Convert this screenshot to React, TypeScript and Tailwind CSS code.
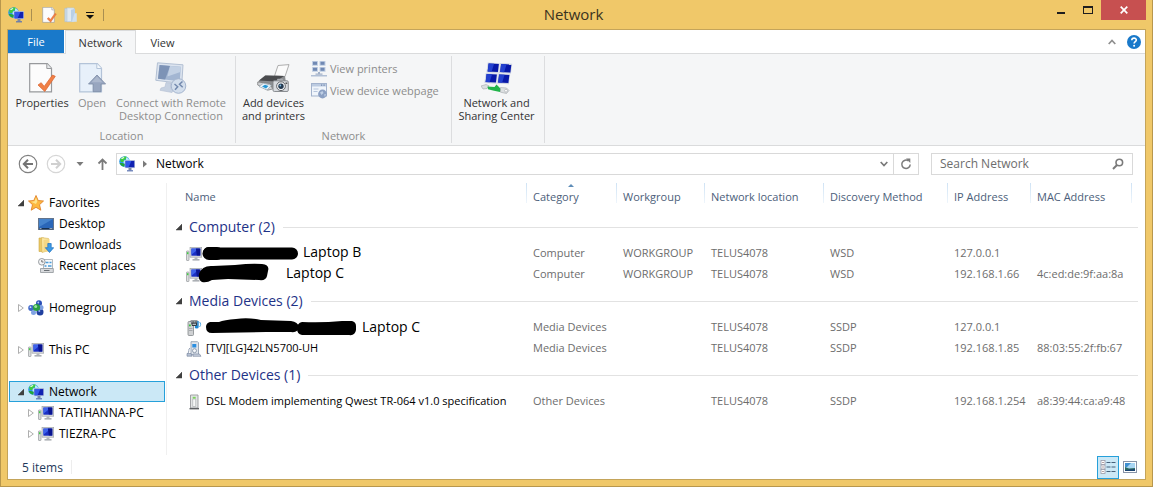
import { useState } from 'react';
import type { ReactNode } from 'react';

type IconProps = { className?: string };

/* ---------- icons ---------- */

function Monitor({ x, y, w, h }: { x: number; y: number; w: number; h: number }) {
  return (
    <g>
      <rect x={x} y={y} width={w} height={h} fill="#d5d7da" stroke="#9a9ea3" strokeWidth="0.6" />
      <rect x={x + 1.4} y={y + 1.3} width={w - 2.8} height={h - 2.8} fill="#1a2fc4" />
      <path d={`M${x + 1.4} ${y + 1.3}h${w - 4}L${x + 1.4} ${y + h - 2.5}z`} fill="#3d62ea" />
      <path d={`M${x + w / 2} ${y + 1.3}h${w / 2 - 1.4}v${h - 3}h-${w / 2 - 2.4}z`} fill="#0a1590" />
    </g>
  );
}

function NetworkIcon({ className = 'w-4 h-4' }: IconProps) {
  return (
    <svg viewBox="0 0 16 16" className={className}>
      <circle cx="5.5" cy="5.5" r="5.3" fill="#2f9be6" />
      <path d="M1 3.500C2.500.800 6 0 8 .900L7 3 5 4 4.500 6 2 6z" fill="#3ccc3f" />
      <path d="M3 7l3 1-1 2.700C2.500 10 1.200 8.500.600 7z" fill="#22a836" />
      <path d="M7 1.200c1.500.5 2.800 1.500 3.200 2.900H7z" fill="#b5e9fa" />
      <path d="M1.800 2.800C3 1.300 4.200.800 5.500.900L4 3z" fill="#d8f8d4" />
      <path d="M4.800 4.800L6 4.300v3.500L4.500 7z" fill="#c9eefc" />
      <rect x="5.800" y="4.100" width="10.200" height="8" fill="#b9c4dc" />
      <rect x="6.600" y="4.900" width="8.700" height="6.400" fill="#1022b2" />
      <path d="M6.600 4.900h5.800L9.600 11.300h-3z" fill="#3157ea" />
      <path d="M9.500 12h3v2.400h-3z" fill="#7c8aa6" />
      <path d="M8 14.200h6v1.200H8z" fill="#5a72b2" />
    </svg>
  );
}

function PcIcon({ className = 'w-4 h-4' }: IconProps) {
  return (
    <svg viewBox="0 0 16 16" className={className}>
      <rect x="0.500" y="5" width="2.500" height="9.500" rx="0.500" fill="#dcdedf" stroke="#95999c" strokeWidth="0.700" />
      <rect x="1.100" y="6.200" width="1.300" height="2" fill="#2fce32" />
      <Monitor x={4} y={1.3} w={11.700} h={9.900} />
      <path d="M8.500 11.400h3v1.800h-3z" fill="#b4b8bc" />
      <path d="M6.500 13.200h7v1.300h-7z" fill="#9a9fa4" />
    </svg>
  );
}

function PageCheckIcon({ className }: IconProps) {
  return (
    <svg viewBox="0 0 27 30" className={className}>
      <path d="M.7.700h17.600l4.200 4.500v23.600H.700z" fill="#fcfcfc" stroke="#97999c" strokeWidth="1.200" />
      <path d="M17.800.700v4.800h4.700" fill="#e8eaec" stroke="#97999c" />
      <path d="M9 22l3.200-2.300 3 3.700L23.500 12l2.800 1.300-10.500 15.200z" fill="#f07f45" stroke="#d9622c" strokeWidth="0.700" />
    </svg>
  );
}

function OpenIcon({ className }: IconProps) {
  return (
    <svg viewBox="0 0 27 30" className={className}>
      <path d="M.7.700h17.600l4.200 4.500v23.600H.700z" fill="#e7f0fa" stroke="#b3c3d8" strokeWidth="1.200" />
      <path d="M17.800.700v4.800h4.700" fill="#f5f9fd" stroke="#b3c3d8" />
      <path d="M18 12l8.600 9h-4.700v7.700h-7.800V21H9.500z" fill="#98a6bf" stroke="#7b8aa5" strokeWidth="0.800" />
      <path d="M18 13.500l5.500 5.800h-11z" fill="#acb8cd" />
    </svg>
  );
}

function RemoteIcon({ className }: IconProps) {
  return (
    <svg viewBox="0 0 32 32" className={className}>
      <path d="M2.500.800l25.500 2-1.200 18.700L.800 18.300z" fill="#dce4ef" stroke="#b3c0d3" />
      <path d="M4.600 3l21.200 1.700-1 14.600L3 16.800z" fill="#a3b6d2" />
      <path d="M4.600 3l10.500.9-5 13.700L3 16.800z" fill="#7d93b6" />
      <path d="M15 3.900l10.800.8-.4 5.300-13 4.500z" fill="#c3d1e4" />
      <path d="M11 20.500l5 .5v5.500l3 1.500-2 2.500-12-2.200 1-2.300 4-1z" fill="#c6d1e1" stroke="#b1bed2" strokeWidth="0.600" />
      <circle cx="23.500" cy="24" r="7.300" fill="#d3deec" stroke="#a5b5ce" />
      <path d="M19.500 22l3.200 2.700-2.700 3M27.500 19.500l-3 2.700 3.200 3" fill="none" stroke="#7389ad" strokeWidth="1.500" />
    </svg>
  );
}

function PrinterIcon({ className }: IconProps) {
  return (
    <svg viewBox="0 0 33 29" className={className}>
      <path d="M17.500 12L21 1.500 32 .600 28 12.500z" fill="#fbfbfb" stroke="#9b9b9b" strokeWidth="0.800" />
      <path d="M1 17.500L8 11.500l20 .5 1 7-14 5z" fill="#8b8d90" />
      <path d="M2 16.500l6.500-5L27 12l-8 5.500z" fill="#4a4b4e" />
      <path d="M.700 18l12 1.500 3 5.500-5 1.200L.700 21z" fill="#cfd2d5" stroke="#777" strokeWidth="0.700" />
      <path d="M2 22.500l4.500-3.200 8 2-4.500 4.700z" fill="#edf6fc" stroke="#8c9aa5" strokeWidth="0.600" />
      <path d="M5 22.500l3-1.800 3.500 1.200-2.500 2.500z" fill="#2596d4" />
      <rect x="16" y="16.800" width="15.300" height="10.700" rx="1.300" fill="#d7dade" stroke="#808388" strokeWidth="0.900" />
      <path d="M19.500 16.500l1-1.800h5l1 1.800z" fill="#a8abb0" />
      <circle cx="24" cy="22.200" r="4.400" fill="#f2f3f5" stroke="#64676b" />
      <circle cx="24" cy="22.200" r="2.700" fill="#22384f" />
      <circle cx="23.300" cy="21.500" r="0.900" fill="#80bce4" />
      <path d="M28.500 18.500h1.800v1.500h-1.800z" fill="#555" />
    </svg>
  );
}

function ViewPrintersIcon() {
  const screens = [[1, 0], [8.500, 0], [1, 6], [8.500, 6]];
  return (
    <svg viewBox="0 0 16 16" className="w-4 h-4">
      {screens.map(([x, y], i) => (
        <g key={i}>
          <rect x={x} y={y} width="6" height="4.800" fill="#c3d0e4" />
          <rect x={x + 1} y={y + 0.800} width="4" height="3" fill="#7189b3" />
        </g>
      ))}
      <path d="M7 11h2v2H7zM4.500 12.500h7v1.300h-7z" fill="#a2b1c9" />
      <path d="M0 14h16v1.500H0z" fill="#b1c0d6" />
    </svg>
  );
}

function WebpageIcon() {
  return (
    <svg viewBox="0 0 16 16" className="w-4 h-4">
      <rect x="0.500" y="0.500" width="15" height="12.500" fill="#f0f5fb" stroke="#a3b3cd" />
      <path d="M1 1h14v2.500H1z" fill="#bccbe1" />
      <path d="M10 1.500h1.200v1.200H10zM12.500 1.500h1.200v1.200h-1.200z" fill="#6e84ab" />
      <path d="M2.500 6h5M2.500 8.500h4" stroke="#b6c5dc" />
      <circle cx="11.500" cy="11" r="4.400" fill="#8ba0c3" />
      <path d="M9 9.500l2.500-1.500 1 2-2 2zM13 11.500l2-.5-1 3z" fill="#bfcfe5" />
    </svg>
  );
}

function SharingCenterIcon({ className }: IconProps) {
  return (
    <svg viewBox="0 0 32 32" className={className}>
      {[[6, 1], [18.500, 1.500], [4, 11.500], [16.500, 12]].map(([x, y], i) => (
        <g key={i}>
          <path d={`M${x + 0.700} ${y - 0.500}l12 .7-1.300 10-12-.7z`} fill="#cdd3e2" />
          <path d={`M${x + 1.600} ${y + 0.500}l10.300.6-1 8-10.300-.6z`} fill="#0718a8" />
          <path d={`M${x + 1.600} ${y + 0.500}l5.500.3-2.500 8-4-.3z`} fill="#2340cf" />
        </g>
      ))}
      <path d="M0 24l5-1.500 3 1.300-2 2.700-4 .5z" fill="#dcdfe1" stroke="#a3a8ab" strokeWidth="0.600" />
      <path d="M6.500 24.500l7 .5 2-2.500 4.500 4.500-1 3-6-1.200-6-1.500z" fill="#21b44a" />
      <path d="M19.500 25.500l6 .5 2.500 2.500-2.500 3-6-1.300z" fill="#dcdfe1" stroke="#a3a8ab" strokeWidth="0.600" />
      <circle cx="25" cy="28.700" r="1.400" fill="#fff" stroke="#a3a8ab" strokeWidth="0.600" />
    </svg>
  );
}

function FolderIcon({ className }: IconProps) {
  return (
    <svg viewBox="0 0 16 18" className={className}>
      <path d="M1 1.500h6v15H1z" fill="#c9d9e8" stroke="#aebccb" strokeWidth="0.600" />
      <path d="M3.500 1h8v15.500h-8z" fill="#dfe9f2" stroke="#b4c4d6" strokeWidth="0.600" />
      <path d="M8 3l4.500-1v12L8 17z" fill="#b9d0e7" />
      <path d="M12 7h2.500v9.500H9z" fill="#cfe0ef" />
    </svg>
  );
}

function StarIcon() {
  return (
    <svg viewBox="0 0 16 16" className="w-4 h-4">
      <path d="M8 .500l2.200 5 5.300.500-4 3.700 1.300 5.500L8 12.300l-4.800 2.900 1.300-5.500-4-3.700 5.300-.5z" fill="#fdb83f" stroke="#e1832b" strokeWidth="0.900" />
      <path d="M8 2.500l1.400 3.800L8 9 3 6.700l3.500-.5z" fill="#fee38c" />
    </svg>
  );
}

function DesktopIcon() {
  return (
    <svg viewBox="0 0 16 16" className="w-4 h-4">
      <rect x="0.500" y="2.500" width="15" height="11" fill="#2a66b8" stroke="#63748c" />
      <path d="M1 3h14L1 11z" fill="#4583cc" />
      <path d="M1 12h14v1.300H1z" fill="#18304f" />
      <path d="M1.500 12.200h2v.8h-2zM11.500 12.200h3v.8h-3z" fill="#b8cce4" />
    </svg>
  );
}

function DownloadsIcon() {
  return (
    <svg viewBox="0 0 16 16" className="w-4 h-4">
      <path d="M1 1h5v13.500H1z" fill="#eac866" stroke="#cda745" strokeWidth="0.600" />
      <path d="M3.500.600l7 .9v12L4 15.500z" fill="#fbe8a6" stroke="#d5b050" strokeWidth="0.600" />
      <path d="M5.500 3l6-1v12.500H5.500z" fill="#f4d785" />
      <path d="M9.800 6.500h3.400v4.200h2.500l-4.200 4.800-4.200-4.800h2.500z" fill="#3c9ae6" stroke="#1d6fbe" strokeWidth="0.700" />
    </svg>
  );
}

function RecentIcon() {
  return (
    <svg viewBox="0 0 16 16" className="w-4 h-4">
      <path d="M5.500 1.500h9v9h-9z" fill="#f6f8fa" stroke="#a2a7ac" strokeWidth="0.800" />
      <path d="M7.500 4.500h3M11.500 4.500h2M6.500 8h2M10 8h3.500" stroke="#4a9bd9" strokeWidth="1.400" />
      <path d="M2.500 10.500h12.800v4H2.500z" fill="#d8dadd" stroke="#8f9499" strokeWidth="0.800" />
      <path d="M6 12.500h5.500" stroke="#6c7176" />
      <circle cx="3.800" cy="3.800" r="3.300" fill="#f3f4f5" stroke="#8f9499" strokeWidth="0.900" />
      <path d="M3.800 2v2h1.700" fill="none" stroke="#555" strokeWidth="0.800" />
    </svg>
  );
}

function HomegroupIcon() {
  return (
    <svg viewBox="0 0 16 16" className="w-4 h-4">
      <circle cx="11" cy="3.300" r="3" fill="#2a4fb6" />
      <circle cx="3.200" cy="8" r="3" fill="#3f68c9" />
      <circle cx="12" cy="12" r="3.500" fill="#20409f" />
      <circle cx="5.500" cy="12.500" r="2.500" fill="#7fa3e4" />
      <circle cx="13" cy="7.500" r="2.500" fill="#7d9fe0" />
      <circle cx="8.500" cy="7.500" r="3.600" fill="#2aa043" />
      <circle cx="7.700" cy="6.500" r="1.500" fill="#9be39d" />
      <circle cx="10.300" cy="2.500" r="0.900" fill="#b7cdf5" />
      <circle cx="2.500" cy="7.200" r="0.900" fill="#cfdef9" />
      <circle cx="11.300" cy="11" r="1" fill="#8fb0ef" />
    </svg>
  );
}

function MediaServerIcon() {
  return (
    <svg viewBox="0 0 16 16" className="w-4 h-4">
      <rect x="2" y="1.500" width="5.500" height="14" rx="1" fill="#cfd1d3" stroke="#84888b" strokeWidth="0.800" />
      <path d="M3 8h3.500v1H3zM3 10h3.500v1H3z" fill="#a4a8ab" />
      <rect x="3" y="4.500" width="1.800" height="1.800" fill="#33c43b" />
      <path d="M4.500.500h7v5.500H6z" fill="#333b42" />
      <path d="M5.300 1.300h1.300v1.200H5.300zM7.500 1.300h1.300v1.200H7.500zM9.500 1.300h1v1.200h-1zM6.500 3.800h3.500v1H6.500z" fill="#dfe6ea" />
      <path d="M12 1v5.500" stroke="#1d86d1" strokeWidth="1.400" />
      <ellipse cx="10.700" cy="7" rx="2" ry="1.500" fill="#1d86d1" />
      <path d="M13.500 2c1.500 1 1.500 3.500 0 5" fill="none" stroke="#53aae6" />
    </svg>
  );
}

function MediaPlayerIcon() {
  return (
    <svg viewBox="0 0 16 16" className="w-4 h-4">
      <path d="M5 .700h6.500l1 1v12H5z" fill="#dfe4eb" stroke="#8795a8" strokeWidth="0.800" />
      <rect x="6.300" y="3" width="4" height="3.500" fill="#2a8ee0" />
      <circle cx="8.500" cy="9.700" r="2" fill="#f4f6f9" stroke="#7c8ba0" strokeWidth="0.800" />
      <path d="M4 7C2 8 3.500 11 1.800 12.500" fill="none" stroke="#93a0b4" />
      <path d="M1 12.500h4l1 2.700H1z" fill="#b6c1d4" stroke="#73829b" strokeWidth="0.600" />
      <path d="M7 13h6.500l1.500 2.300H7z" fill="#c6cfdc" stroke="#73829b" strokeWidth="0.600" />
    </svg>
  );
}

function ModemIcon() {
  return (
    <svg viewBox="0 0 16 16" className="w-4 h-4">
      <path d="M4.500 1h7.500v13H4.500z" fill="#e3e5e6" stroke="#97999c" strokeWidth="0.900" />
      <path d="M6.700 5h3v7.500h-3z" fill="#f5f6f6" stroke="#a4a7a9" strokeWidth="0.600" />
      <path d="M6.700 2.800h3v1.800h-3z" fill="#7bd35c" />
      <path d="M3.500 14h9.500v1.400H3.500z" fill="#5d6063" />
    </svg>
  );
}

function Twisty({ open }: { open: boolean }) {
  return (
    <svg viewBox="0 0 6 8" className="w-1.5 h-2 shrink-0">
      {open ? (
        <path d="M6 1v6H0z" fill="#404040" stroke="#404040" strokeWidth="0.500" />
      ) : (
        <path d="M.500.500L5.300 4 .500 7.500z" fill="#fff" stroke="#a6a6a6" strokeWidth="0.900" />
      )}
    </svg>
  );
}

/* ---------- title bar ---------- */

function TitleBar() {
  return (
    <header className="grid grid-cols-[1fr_auto_1fr] h-[29px]">
      <div className="flex items-center pl-px">
        <NetworkIcon />
        <span className="w-px h-3 ml-[7px] bg-[#a98e51]" />
        <button aria-label="Properties" className="ml-2.5">
          <PageCheckIcon className="w-[15px] h-4" />
        </button>
        <button aria-label="New folder" className="ml-1.5">
          <FolderIcon className="w-4 h-4" />
        </button>
        <button aria-label="Customize Quick Access Toolbar" className="ml-[7px]">
          <svg viewBox="0 0 8 8" className="w-2 h-2">
            <path d="M0 1h8v1H0zM0 4h8L4 8z" fill="#111" />
          </svg>
        </button>
        <span className="w-px h-3 ml-[9px] bg-[#a98e51]" />
      </div>
      <h1 className="font-normal text-[15px] leading-[29px] pr-1.5 text-[#3a3220]">Network</h1>
      <div className="flex items-start justify-end">
        <button aria-label="Minimize" className="w-[26px] h-5 flex items-center justify-center">
          <svg viewBox="0 0 8 8" className="w-2 h-2">
            <path d="M0 6h8v2H0z" fill="#1e1e1e" />
          </svg>
        </button>
        <button aria-label="Maximize" className="w-[27px] h-5 flex items-center justify-center">
          <svg viewBox="0 0 10 8" className="w-2.5 h-2">
            <path d="M0 0h10v8H0zM1 2v5h8V2z" fill="#1e1e1e" fillRule="evenodd" />
          </svg>
        </button>
        <button aria-label="Close" className="w-[45px] h-5 flex items-center justify-center bg-[#c75050]">
          <svg viewBox="0 0 8 8" className="w-2 h-2">
            <path d="M.700.700l6.600 6.600M7.300.700L.700 7.300" stroke="#fff" strokeWidth="1.700" />
          </svg>
        </button>
      </div>
    </header>
  );
}

/* ---------- ribbon ---------- */

function BigButton({ label, icon, disabled, className = '' }: { label: string[]; icon: ReactNode; disabled?: boolean; className?: string }) {
  return (
    <button
      disabled={disabled}
      className={`flex flex-col items-center text-[11px] leading-[13px] whitespace-nowrap ${disabled ? 'text-[#8d8d8d]' : 'text-[#333]'} ${className}`}
    >
      <span className="h-9 flex items-center">{icon}</span>
      {label.map((line) => (
        <span key={line}>{line}</span>
      ))}
    </button>
  );
}

function SmallButton({ label, icon }: { label: string; icon: ReactNode }) {
  return (
    <button disabled className="flex items-center gap-[3px] h-[22px] text-[11px] text-[#8d8d8d] whitespace-nowrap">
      {icon}
      {label}
    </button>
  );
}

function RibbonGroup({ title, children, className }: { title: string; children?: ReactNode; className: string }) {
  return (
    <section className={`flex flex-col justify-between border-r border-[#dcdddf] h-[87px] ${className}`}>
      <div className="flex items-start">{children}</div>
      <p className="text-[11px] leading-[14px] text-center text-[#8d8d8d]">{title}</p>
    </section>
  );
}

function Ribbon() {
  const [tab, setTab] = useState('Network');

  return (
    <div>
      <nav className="flex h-6 text-[11px] border-b border-[#dadbdc]">
        <button className="w-14 pt-0.5 bg-[#1979ca] text-white">File</button>
        {['Network', 'View'].map((name) => (
          <button
            key={name}
            onClick={() => setTab(name)}
            className={
              tab === name
                ? 'ml-px w-[71px] h-6 pt-0.5 bg-[#f5f6f7] border-x border-t border-[#dadbdc] text-[#333]'
                : 'w-[53px] pt-[3px] text-[#333]'
            }
          >
            {name}
          </button>
        ))}
        <div className="ml-auto flex items-center gap-[11px] pr-1">
          <button aria-label="Minimize the Ribbon">
            <svg viewBox="0 0 8 6" className="w-2 h-1.5">
              <path d="M.700 5L4 1.500 7.300 5" fill="none" stroke="#8f8f8f" strokeWidth="1.700" />
            </svg>
          </button>
          <button aria-label="Help">
            <svg viewBox="0 0 14 14" className="w-3.5 h-3.5">
              <circle cx="7" cy="7" r="7" fill="#1979ca" />
              <path d="M4.800 5.300C4.800 2.300 9.300 2.500 9.300 5 9.300 6.700 7.100 6.600 7.100 8.500" fill="none" stroke="#fff" strokeWidth="1.600" />
              <circle cx="7.100" cy="10.800" r="1" fill="#fff" />
            </svg>
          </button>
        </div>
      </nav>

      <div className="flex items-start h-[92px] pt-0.5 bg-[#f5f6f7] border-b border-[#dadbdc]">
        <RibbonGroup title="Location" className="w-[228px]">
          <BigButton className="w-[68px] pt-1" label={['Properties']} icon={<PageCheckIcon className="w-[27px] h-[30px]" />} />
          <BigButton className="w-8 pt-1" disabled label={['Open']} icon={<OpenIcon className="w-[27px] h-[30px]" />} />
          <BigButton
            className="w-[126px] pt-1"
            disabled
            label={['Connect with Remote', 'Desktop Connection']}
            icon={<RemoteIcon className="w-8 h-8" />}
          />
        </RibbonGroup>
        <RibbonGroup title="Network" className="w-[216px]">
          <BigButton className="w-[75px] pt-1" label={['Add devices', 'and printers']} icon={<PrinterIcon className="w-[33px] h-[29px]" />} />
          <div className="pt-0.5">
            <SmallButton label="View printers" icon={<ViewPrintersIcon />} />
            <SmallButton label="View device webpage" icon={<WebpageIcon />} />
          </div>
        </RibbonGroup>
        <RibbonGroup title="" className="w-[93px]">
          <BigButton
            className="w-[89px] pt-1"
            label={['Network and', 'Sharing Center']}
            icon={<SharingCenterIcon className="w-8 h-8" />}
          />
        </RibbonGroup>
      </div>
    </div>
  );
}

/* ---------- address bar ---------- */

function AddressBar() {
  return (
    <div className="flex items-center h-9 pl-2.5 pr-3 text-[11px]">
      <button aria-label="Back">
        <svg viewBox="0 0 20 20" className="w-5 h-5">
          <circle cx="10" cy="10" r="8.700" fill="#fff" stroke="#808080" strokeWidth="1.200" />
          <path d="M15 10H6M10 5.800L5.800 10l4.200 4.200" fill="none" stroke="#747474" strokeWidth="2" />
        </svg>
      </button>
      <button aria-label="Forward" disabled className="ml-2">
        <svg viewBox="0 0 20 20" className="w-5 h-5">
          <circle cx="10" cy="10" r="8.700" fill="#fff" stroke="#d6d6d6" strokeWidth="1.200" />
          <path d="M5 10h9M10 5.800l4.200 4.200-4.200 4.200" fill="none" stroke="#d0d0d0" strokeWidth="2" />
        </svg>
      </button>
      <button aria-label="Recent locations" className="ml-2.5">
        <svg viewBox="0 0 8 4" className="w-2 h-1">
          <path d="M.500 0h7L4 4z" fill="#7a7a7a" />
        </svg>
      </button>
      <button aria-label="Up" className="ml-3">
        <svg viewBox="0 0 12 12" className="w-3 h-3">
          <path d="M6.500 12V2M2.500 5.500l4-4 4 4" fill="none" stroke="#7a7a7a" strokeWidth="1.800" />
        </svg>
      </button>

      <div className="flex flex-1 items-center h-[22px] ml-2 border border-[#d9d9d9]">
        <NetworkIcon className="w-4 h-4 ml-0.5" />
        <svg viewBox="0 0 5 8" className="w-[5px] h-2 ml-2">
          <path d="M0 .500L4 4 0 7.500z" fill="#7a7a7a" />
        </svg>
        <button className="ml-2 text-xs text-black">Network</button>
        <button aria-label="Previous locations" className="ml-auto mr-[5px]">
          <svg viewBox="0 0 8 6" className="w-2 h-1.5">
            <path d="M.700 1L4 4.500 7.300 1" fill="none" stroke="#7a7a7a" strokeWidth="1.700" />
          </svg>
        </button>
        <button aria-label="Refresh" className="flex items-center justify-center w-[25px] h-5 border-l border-[#d9d9d9]">
          <svg viewBox="0 0 12 12" className="w-3 h-3">
            <path d="M8.500 2.900A4.200 4.200 0 1 0 10.200 6.500" fill="none" stroke="#7a7a7a" strokeWidth="1.500" />
            <path d="M6 .500h4.300V5z" fill="#7a7a7a" />
          </svg>
        </button>
      </div>

      <label className="flex items-center w-[202px] h-[22px] ml-3 pl-2 pr-2 border border-[#d9d9d9]">
        <input aria-label="Search Network" placeholder="Search Network" className="flex-1 min-w-0 text-xs outline-none placeholder:text-[#6d6d6d]" />
        <svg viewBox="0 0 12 12" className="w-3 h-3">
          <circle cx="7.300" cy="4.500" r="3.300" fill="none" stroke="#7a7a7a" strokeWidth="1.600" />
          <path d="M5 7L1 11" stroke="#7a7a7a" strokeWidth="2" />
        </svg>
      </label>
    </div>
  );
}

/* ---------- navigation pane ---------- */

type NavItem = { label: string; icon: ReactNode; open?: boolean; children?: { label: string; icon: ReactNode; twisty?: boolean }[] };

const navItems: NavItem[] = [
  {
    label: 'Favorites',
    icon: <StarIcon />,
    open: true,
    children: [
      { label: 'Desktop', icon: <DesktopIcon /> },
      { label: 'Downloads', icon: <DownloadsIcon /> },
      { label: 'Recent places', icon: <RecentIcon /> }
    ]
  },
  { label: 'Homegroup', icon: <HomegroupIcon /> },
  { label: 'This PC', icon: <PcIcon /> },
  {
    label: 'Network',
    icon: <NetworkIcon />,
    open: true,
    children: [
      { label: 'TATIHANNA-PC', icon: <PcIcon />, twisty: true },
      { label: 'TIEZRA-PC', icon: <PcIcon />, twisty: true }
    ]
  }
];

function NavPane() {
  const [selected, setSelected] = useState('Network');

  return (
    <aside className="w-[159px] shrink-0 pt-[9px] pl-px pr-px border-r border-[#f0f0f0]">
      <ul className="flex flex-col gap-[21px] text-xs text-black">
        {navItems.map((item) => (
          <li key={item.label}>
            <button
              onClick={() => setSelected(item.label)}
              className={`flex items-center w-full h-[21px] pl-2 border ${
                selected === item.label ? 'bg-[#cbe8f6] border-[#26a0da]' : 'border-transparent'
              }`}
            >
              <Twisty open={!!item.open} />
              <span className="ml-1 mr-[5px]">{item.icon}</span>
              {item.label}
            </button>
            <ul>
              {item.children?.map((child) => (
                <li key={child.label}>
                  <button className="flex items-center w-full h-[21px] pl-[19px]">
                    <span className="w-1.5">{child.twisty && <Twisty open={false} />}</span>
                    <span className="ml-1 mr-[5px]">{child.icon}</span>
                    {child.label}
                  </button>
                </li>
              ))}
            </ul>
          </li>
        ))}
      </ul>
    </aside>
  );
}

/* ---------- details list ---------- */

type Device = {
  icon: ReactNode;
  name: ReactNode;
  cells: string[];
};

const groups: { title: string; devices: Device[] }[] = [
  {
    title: 'Computer (2)',
    devices: [
      {
        icon: <PcIcon />,
        name: (
          <>
            <svg viewBox="0 0 97 20" className="w-[97px] h-5">
              <path d="M7 9l2 .5 81 0" stroke="#000" strokeWidth="12" strokeLinecap="round" fill="none" />
              <path d="M7 9.500h8" stroke="#000" strokeWidth="13" strokeLinecap="round" />
            </svg>
            <span className="ml-1 pb-1 text-sm leading-5">Laptop B</span>
          </>
        ),
        cells: ['Computer', 'WORKGROUP', 'TELUS4078', 'WSD', '127.0.0.1', '']
      },
      {
        icon: <PcIcon />,
        name: (
          <>
            <svg viewBox="0 0 67 20" className="w-[67px] h-5 overflow-visible">
              <path d="M-3 9Q0 0 11 1L33 0Q50-2 60-1 68 0 66 6L65 11Q64 16 57 15L26 14 10 15Q5 18 0 17-4 15-3 9z" fill="#000" />
            </svg>
            <span className="ml-[17px] pb-1 text-sm leading-5">Laptop C</span>
          </>
        ),
        cells: ['Computer', 'WORKGROUP', 'TELUS4078', 'WSD', '192.168.1.66', '4c:ed:de:9f:aa:8a']
      }
    ]
  },
  {
    title: 'Media Devices (2)',
    devices: [
      {
        icon: <MediaServerIcon />,
        name: (
          <>
            <svg viewBox="0 0 151 20" className="w-[151px] h-5 ml-1 overflow-visible">
              <path d="M4 4h9Q18 2 30 1 42-1 55 2L85 3Q92 4 93 9 92 15 85 14L60 14 6 15Q0 15 0 9 0 5 4 4z" fill="#000" />
              <path d="M96 4q20 1 40-1h10q4 1 4 5v4q-1 6-7 5H96q-5-1-5-6 0-6 5-7z" fill="#000" />
            </svg>
            <span className="ml-[5px] pb-0.5 text-sm leading-5">Laptop C</span>
          </>
        ),
        cells: ['Media Devices', '', 'TELUS4078', 'SSDP', '127.0.0.1', '']
      },
      {
        icon: <MediaPlayerIcon />,
        name: <span className="ml-1">[TV][LG]42LN5700-UH</span>,
        cells: ['Media Devices', '', 'TELUS4078', 'SSDP', '192.168.1.85', '88:03:55:2f:fb:67']
      }
    ]
  },
  {
    title: 'Other Devices (1)',
    devices: [
      {
        icon: <ModemIcon />,
        name: <span className="ml-1">DSL Modem implementing Qwest TR-064 v1.0 specification</span>,
        cells: ['Other Devices', '', 'TELUS4078', 'SSDP', '192.168.1.254', 'a8:39:44:ca:a9:48']
      }
    ]
  }
];

const columns = ['Category', 'Workgroup', 'Network location', 'Discovery Method', 'IP Address', 'MAC Address'];

function DeviceTable() {
  return (
    <table className="w-full table-fixed text-left text-[11px] whitespace-nowrap">
      <colgroup>
        <col />
        <col className="w-[90px]" />
        <col className="w-[88px]" />
        <col className="w-[119px]" />
        <col className="w-[124px]" />
        <col className="w-[83px]" />
        <col className="w-[101px]" />
        <col className="w-3.5" />
      </colgroup>
      <thead>
        <tr className="h-7 text-[#4c607a]">
          <th className="p-0 pl-[18px] font-normal">Name</th>
          {columns.map((col) => (
            <th key={col} className="relative p-0 font-normal">
              {col === 'Category' && (
                <svg viewBox="0 0 8 4" className="absolute top-0 left-[41px] w-2 h-1">
                  <path d="M1 4l3-3 3 3z" fill="#5f8db8" />
                </svg>
              )}
              <div className="flex items-center h-7">
                <span className="self-start w-px h-5 mr-1.5 bg-gradient-to-b from-[#cfe3f5] to-[#eef5fb]" />
                {col}
              </div>
            </th>
          ))}
          <td className="p-0 align-top">
            <div className="w-px h-5 bg-gradient-to-b from-[#cfe3f5] to-[#eef5fb]" />
          </td>
        </tr>
      </thead>
      {groups.map((group) => (
        <tbody key={group.title}>
          <tr className="h-8">
            <th colSpan={8} className="p-0 pl-[9px] pr-[7px] font-normal">
              <button className="flex items-center w-full text-sm text-[#1e3287]">
                <Twisty open />
                <span className="ml-[7px] mr-2">{group.title}</span>
                <span className="flex-1 h-px bg-[#e2e2e2]" />
              </button>
            </th>
          </tr>
          {group.devices.map((device, i) => (
            <tr key={i} className="h-[21px] text-[#6d6d6d]">
              <td className="p-0 pl-[19px]">
                <div className="flex items-center h-[21px] text-black">
                  {device.icon}
                  {device.name}
                </div>
              </td>
              {device.cells.map((cell, j) => (
                <td key={j} className="p-0 pl-[7px]">{cell}</td>
              ))}
              <td />
            </tr>
          ))}
        </tbody>
      ))}
    </table>
  );
}

function StatusBar() {
  return (
    <footer className="flex items-center h-6 pl-3.5 pr-1 text-xs text-[#1e395b]">
      <span className="pt-0.5">5 items</span>
      <span className="w-px h-3.5 ml-2 bg-[#ededed]" />
      <button aria-label="Details view" className="flex items-center justify-center w-[22px] h-[23px] ml-auto bg-[#cbe8f6] border border-[#26a0da]">
        <svg viewBox="0 0 16 14" className="w-4 h-3.5">
          {[0.500, 5, 9.500].map((y) => (
            <g key={y}>
              <rect x="1" y={y} width="4" height="4" fill="#fff" stroke="#9a9aa6" strokeWidth="0.800" />
              <path d={`M2.500 ${y + 1.500}h1v1h-1z`} fill="#6a4a4a" />
              <path d={`M6.500 ${y + 1.500}h4v1h-4zM11.500 ${y + 1.500}h4v1h-4z`} fill="#47617a" />
            </g>
          ))}
        </svg>
      </button>
      <button aria-label="Large icons view" className="flex items-center justify-center w-[22px] h-[23px]">
        <svg viewBox="0 0 14 12" className="w-3.5 h-3">
          <rect x="0.500" y="0.500" width="13" height="11" fill="#fff" stroke="#8994a8" />
          <path d="M2 2h10v8H2z" fill="#a9d6f3" />
          <path d="M2 2h6L4 6H2z" fill="#3f8fd0" />
          <path d="M2 6l4 1.500 6-.5V10H2z" fill="#2d6c62" />
          <path d="M2 9l10-1v2H2z" fill="#1c4470" />
        </svg>
      </button>
    </footer>
  );
}

export default function App() {
  return (
    <div className="flex flex-col min-h-screen px-1.5 pb-1.5 bg-[#f0c869] border-x border-b border-[#b8974d] font-['Open_Sans','Noto_Sans',sans-serif]">
      <TitleBar />
      <div className="flex flex-col flex-1 bg-white border border-[#c4a45a]">
        <Ribbon />
        <AddressBar />
        <div className="flex flex-1 mt-px">
          <NavPane />
          <main className="flex-1 min-w-0">
            <DeviceTable />
          </main>
        </div>
        <StatusBar />
      </div>
    </div>
  );
}
